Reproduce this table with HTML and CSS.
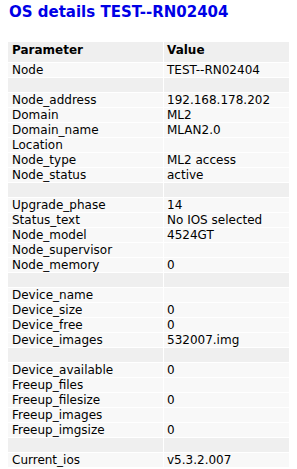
FILE: index.html
```html
<!DOCTYPE html>
<html>
<head>
<meta charset="utf-8">
<link rel="stylesheet" href="styles.css">
</head>
<body>
<h1 class="title">OS details TEST--RN02404</h1>
<table class="details">
<thead>
<tr><th class="c1">Parameter</th><th>Value</th></tr>
</thead>
<tbody>
<tr><td class="c1">Node</td><td>TEST--RN02404</td></tr>
<tr class="sep"><td>&nbsp;</td><td>&nbsp;</td></tr>
<tr><td class="c1">Node_address</td><td>192.168.178.202</td></tr>
<tr><td class="c1">Domain</td><td>ML2</td></tr>
<tr><td class="c1">Domain_name</td><td>MLAN2.0</td></tr>
<tr><td class="c1">Location</td><td></td></tr>
<tr><td class="c1">Node_type</td><td>ML2 access</td></tr>
<tr><td class="c1">Node_status</td><td>active</td></tr>
<tr class="sep"><td>&nbsp;</td><td>&nbsp;</td></tr>
<tr><td class="c1">Upgrade_phase</td><td>14</td></tr>
<tr><td class="c1">Status_text</td><td>No IOS selected</td></tr>
<tr><td class="c1">Node_model</td><td>4524GT</td></tr>
<tr><td class="c1">Node_supervisor</td><td></td></tr>
<tr><td class="c1">Node_memory</td><td>0</td></tr>
<tr class="sep"><td>&nbsp;</td><td>&nbsp;</td></tr>
<tr><td class="c1">Device_name</td><td></td></tr>
<tr><td class="c1">Device_size</td><td>0</td></tr>
<tr><td class="c1">Device_free</td><td>0</td></tr>
<tr><td class="c1">Device_images</td><td>532007.img</td></tr>
<tr class="sep"><td>&nbsp;</td><td>&nbsp;</td></tr>
<tr><td class="c1">Device_available</td><td>0</td></tr>
<tr><td class="c1">Freeup_files</td><td></td></tr>
<tr><td class="c1">Freeup_filesize</td><td>0</td></tr>
<tr><td class="c1">Freeup_images</td><td></td></tr>
<tr><td class="c1">Freeup_imgsize</td><td>0</td></tr>
<tr class="sep"><td>&nbsp;</td><td>&nbsp;</td></tr>
<tr><td class="c1">Current_ios</td><td>v5.3.2.007</td></tr>
</tbody>
</table>
</body>
</html>
```
FILE: styles.css
```css
html, body {
  overflow: hidden;
}
body {
  margin: 0 8px;
  padding-top: 3px;
  background: #ffffff;
  font-family: "DejaVu Sans", Verdana, sans-serif;
  font-size: 12px;
  color: #000000;
}
.title {
  margin: 0 0 20px 1px;
  font-size: 15px;
  line-height: 18px;
  font-weight: bold;
  color: #0000e6;
}
.details {
  width: calc(100% + 8px);
  margin-right: -8px;
  border-collapse: separate;
  border-spacing: 1px;
  margin-left: -1px;
}
.details th,
.details td {
  text-align: left;
  vertical-align: middle;
  padding: 0 3px;
  line-height: 14px;
  height: 14px;
  background: #f8f8f8;
}
.details th {
  font-weight: bold;
  padding: 1px 3px 5px;
  background: #efefef;
}
.details .c1 {
  width: 148px;
  padding-left: 4px;
}
.details .sep td {
  background: #efefef;
}
```
